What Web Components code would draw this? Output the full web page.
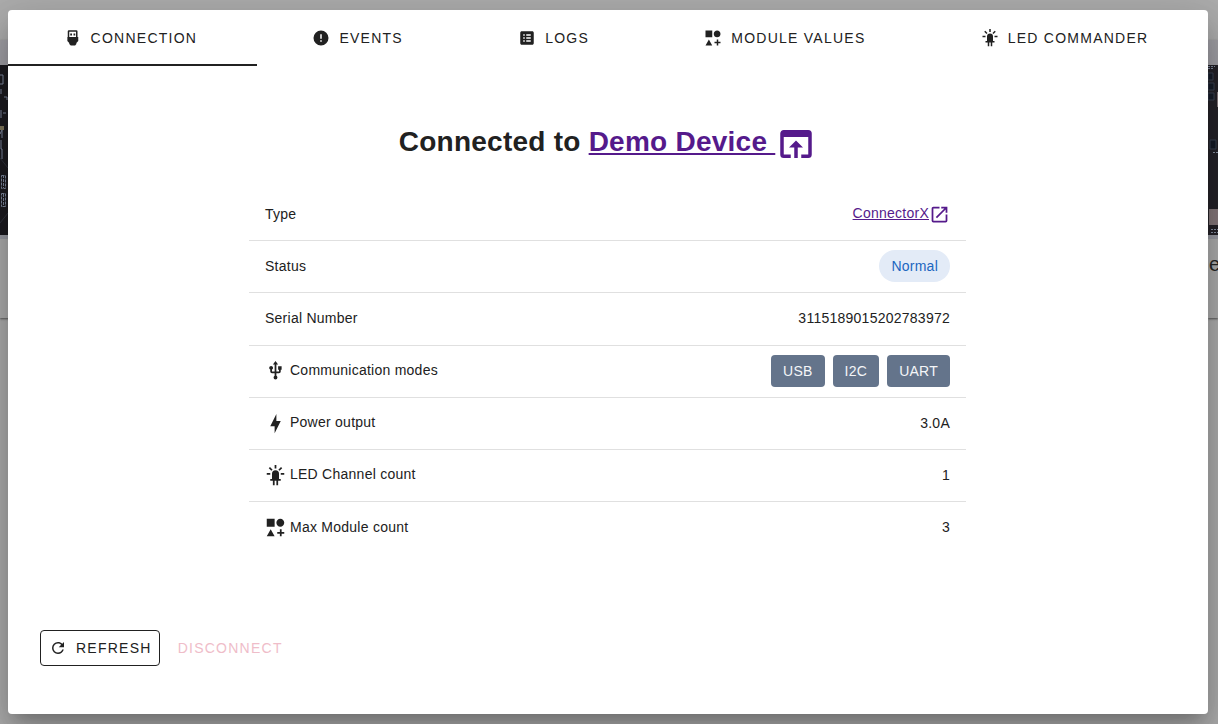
<!DOCTYPE html>
<html lang="en"><head><meta charset="utf-8"><title>Connection</title>
<style>
html,body{margin:0;height:100%;overflow:hidden}
body{font-family:"Liberation Sans",Arial,sans-serif;color:#212121}
</style></head><body>
<device-app></device-app>
<script>
const ICONS={
plug:'M6.5 1.5H16.5A1.5 1.5 0 0 1 18 3V10.5H19V16L16.5 18.5V20L14.8 22H9L7 20V18.5L4.5 16V10.5H5V3A1.5 1.5 0 0 1 6.5 1.5M7 3.5V10.5H16V3.5ZM8.3 6H10.7V8.5H8.3ZM12.7 6H15V8.5H12.7Z',
alert:'M13,13H11V7H13M13,17H11V15H13M12,2A10,10 0 0,0 2,12A10,10 0 0,0 12,22A10,10 0 0,0 22,12A10,10 0 0,0 12,2Z',
list:'M19 3H5C3.9 3 3 3.9 3 5V19C3 20.1 3.9 21 5 21H19C20.1 21 21 20.1 21 19V5C21 3.9 20.1 3 19 3M7 7H9V9H7V7M7 11H9V13H7V11M7 15H9V17H7V15M17 17H11V15H17V17M17 13H11V11H17V13M17 9H11V7H17V9Z',
shapes:'M2,2H11V11H2V2M17.5,2C20,2 22,4 22,6.5C22,9 20,11 17.5,11C15,11 13,9 13,6.5C13,4 15,2 17.5,2M6.5,14L11,22H2L6.5,14M19,17H22V19H19V22H17V19H14V17H17V14H19V17Z',
led:'M11,0V4H13V0H11M18.3,2.29L15.24,5.29L16.64,6.71L19.7,3.71L18.3,2.29M5.71,2.29L4.29,3.71L7.29,6.71L8.71,5.29L5.71,2.29M12,6A4,4 0 0,0 8,10V16H6V18H9V23H11V18H13V23H15V18H18V16H16V10A4,4 0 0,0 12,6M2,9V11H6V9H2M18,9V11H22V9H18Z',
app:'M12,10L8,14H11V20H13V14H16M19,4H5C3.89,4 3,4.9 3,6V18A2,2 0 0,0 5,20H9V18H5V8H19V18H15V20H19A2,2 0 0,0 21,18V6A2,2 0 0,0 19,4Z',
external:'M14,3V5H17.59L7.76,14.83L9.17,16.24L19,6.41V10H21V3M19,19H5V5H12V3H5C3.89,3 3,3.9 3,5V19A2,2 0 0,0 5,21H19A2,2 0 0,0 21,19V12H19V19Z',
usb:'M15,7V11H16V13H13V5H15L12,1L9,5H11V13H8V10.93C8.7,10.56 9.2,9.85 9.2,9C9.2,7.78 8.21,6.8 7,6.8C5.78,6.8 4.8,7.78 4.8,9C4.8,9.85 5.3,10.56 6,10.93V13A2,2 0 0,0 8,15H11V18.05C10.29,18.41 9.8,19.15 9.8,20A2.2,2.2 0 0,0 12,22.2A2.2,2.2 0 0,0 14.2,20C14.2,19.15 13.71,18.41 13,18.05V15H16A2,2 0 0,0 18,13V11H19V7H15Z',
bolt:'M11 15H6L13 1V9H18L11 23V15Z',
refresh:'M17.65,6.35C16.2,4.9 14.21,4 12,4A8,8 0 0,0 4,12A8,8 0 0,0 12,20C15.73,20 18.84,17.45 19.73,14H17.65C16.83,16.33 14.61,18 12,18A6,6 0 0,1 6,12A6,6 0 0,1 12,6C13.66,6 15.14,6.69 16.22,7.78L13,11H20V4L17.65,6.35Z'
};
function define(name,html){
  customElements.define(name,class extends HTMLElement{
    connectedCallback(){
      if(this.shadowRoot)return;
      this.attachShadow({mode:'open'}).innerHTML=typeof html==='function'?html(this):html;
    }
  });
}
define('mdi-icon',el=>`<style>:host{display:inline-block;width:var(--size,18px);height:var(--size,18px);flex:none}svg{display:block;width:100%;height:100%;fill:currentColor}</style><svg viewBox="0 0 24 24"><path fill-rule="${el.getAttribute('name')==='plug'?'evenodd':'nonzero'}" d="${ICONS[el.getAttribute('name')]}"/></svg>`);
define('nav-tab',el=>`<style>:host{display:flex;flex:1 0 auto;box-sizing:border-box;height:56px;padding:0 16px;align-items:center;justify-content:center;font-size:14px;letter-spacing:1.25px;white-space:nowrap;border-bottom:2px solid transparent;padding-top:2px}
:host([active]){border-bottom-color:#212121}mdi-icon{margin:0 9px 0 -4px}</style><mdi-icon name="${el.getAttribute('icon')}"></mdi-icon><span><slot></slot></span>`);
define('tab-bar','<style>:host{display:flex;width:100%}</style><slot></slot>');
define('info-row',el=>`<style>:host{display:flex;box-sizing:border-box;height:52.25px;padding:0 16px;align-items:center;justify-content:space-between;font-size:14px;letter-spacing:.25px;border-bottom:1px solid #e0e0e0}
:host([last]){border-bottom-color:transparent}.label{display:flex;align-items:center;padding-bottom:1.5px}:host([icon]) .label{padding-bottom:3px}mdi-icon{--size:21px;margin-right:4px;position:relative;top:1px}.value{display:flex;align-items:center;gap:8px;padding-bottom:1.5px}</style>
<div class="label">${el.hasAttribute('icon')?`<mdi-icon name="${el.getAttribute('icon')}"></mdi-icon>`:''}<span>${el.getAttribute('label')}</span></div><div class="value"><slot></slot></div>`);
define('mode-chip','<style>:host{display:flex;box-sizing:border-box;height:32px;padding:0 12px;align-items:center;border-radius:4px;background:#64748b;color:#f4f6f8;font-size:14px;letter-spacing:.25px}:host([pill]){border-radius:16px;background:#e3ebf7;color:#1c66c0}</style><slot></slot>');
define('text-link','<style>:host{display:inline-flex;color:#551a8b;align-items:center}a{color:inherit;text-decoration:underline;cursor:pointer;white-space:pre;padding-bottom:var(--lift,0)}</style><a href="#"><slot></slot></a><slot name="icon"></slot>');
define('action-button','<style>:host{display:flex;box-sizing:border-box;height:36px;align-items:center;padding:0 7px 0 8px;font-size:14px;letter-spacing:1.25px;border:1px solid transparent;border-radius:4px}:host([outlined]){border-color:#212121}:host([danger]){color:#efbdc9}</style><slot></slot>');
define('page-backdrop',`<style>:host{display:flex;justify-content:space-between;position:absolute;inset:0;background:#adadad}
.side{width:10px;height:724px;display:flex;flex-direction:column;overflow:hidden}.sp{height:40px}.sheet{height:278px;box-shadow:0 1px 2px #555;background:#adadad;display:flex;flex-direction:column}.head{height:25px;background:#a09fa5}.pic{height:170px;flex:none}.line{height:4px;background:#999ba3}.name{font-size:20px;line-height:50px;height:60px;padding-left:1px;color:#252525}svg{display:block}</style>
<div class="side"><div class="sp"></div><div class="sheet"><div class="head"></div><div class="pic"><svg width="10" height="170"><path fill="#1c1b20" d="M0 0h10v170H0z"/><g fill="none" stroke="#7d879c" stroke-width="1"><path d="M0 10h3v9H0M1 24v5M4 32h3v3M1 45v8M3 48h3M0 69l2 -4v8M1 75v9h1v10"/><path d="M1.5 110.5h4v13h-4zM1.5 128.5h4v13h-4zM3.5 110v13M3.5 129v13" stroke-dasharray="3 1"/></g><path fill="#81775c" d="M0 61h4v4H0z"/><path d="M0 93l8 10M0 158l8-10" stroke="#30333d"/></svg></div><div class="line"></div></div></div>
<div class="side"><div class="sp"></div><div class="sheet"><div class="head"></div><div class="pic"><svg width="10" height="170"><path fill="#252329" d="M0 0h10v170H0z"/><path d="M0 1.5h7M0 3.5h6" stroke="#7d879c" stroke-dasharray="2 1"/><g fill="#171c28" stroke="#3b4251"><path d="M0 8h5v7H0zM0 18h6v7H0zM0 28h6v7H0zM2 75h6v9H2z"/></g><path fill="#85787b" d="M9 27h1v15H9zM1 144h9v16H1z"/><path d="M5 87.5h5M3 164.5h7M3 167.5h7" stroke="#8992a3" stroke-dasharray="2 1"/></svg></div><div class="line"></div><div class="name">e</div></div></div>`);
define('device-dialog',`<style>:host{display:flex;flex-direction:column;box-sizing:border-box;position:relative;width:1200px;height:704px;background:#fff;border-radius:4px;box-shadow:0 11px 15px -7px rgba(0,0,0,.2),0 24px 38px 3px rgba(0,0,0,.14),0 9px 46px 8px rgba(0,0,0,.12)}
h1{display:flex;justify-content:center;align-items:center;margin:58px 0 0;height:36px;font-size:28px;line-height:36px;letter-spacing:.25px;white-space:pre}
h1 mdi-icon{--size:42px;position:relative;top:2px}
.rows{width:717px;margin:28.95px 0 0 241px}.ext{--size:21px;position:relative;top:1px}.rows text-link{--lift:1.5px}
.actions{display:flex;margin:auto 0 48px 32px;gap:9px}.actions mdi-icon{margin-right:9px}</style>
<tab-bar><nav-tab icon="plug" active>CONNECTION</nav-tab><nav-tab icon="alert">EVENTS</nav-tab><nav-tab icon="list">LOGS</nav-tab><nav-tab icon="shapes">MODULE VALUES</nav-tab><nav-tab icon="led">LED COMMANDER</nav-tab></tab-bar>
<h1><span>Connected to </span><text-link>Demo Device <mdi-icon slot="icon" name="app"></mdi-icon></text-link></h1>
<div class="rows"><info-row label="Type"><text-link>ConnectorX<mdi-icon class="ext" slot="icon" name="external"></mdi-icon></text-link></info-row>
<info-row label="Status"><mode-chip pill>Normal</mode-chip></info-row><info-row label="Serial Number">3115189015202783972</info-row>
<info-row label="Communication modes" icon="usb"><mode-chip>USB</mode-chip><mode-chip>I2C</mode-chip><mode-chip>UART</mode-chip></info-row>
<info-row label="Power output" icon="bolt">3.0A</info-row><info-row label="LED Channel count" icon="led">1</info-row><info-row label="Max Module count" icon="shapes" last>3</info-row></div>
<div class="actions"><action-button outlined><mdi-icon name="refresh"></mdi-icon>REFRESH</action-button><action-button danger>DISCONNECT</action-button></div>`);
define('device-app','<style>:host{display:block;position:relative;box-sizing:border-box;height:724px;padding:10px 8px;overflow:hidden}</style><page-backdrop></page-backdrop><device-dialog></device-dialog>');
</script></body></html>
